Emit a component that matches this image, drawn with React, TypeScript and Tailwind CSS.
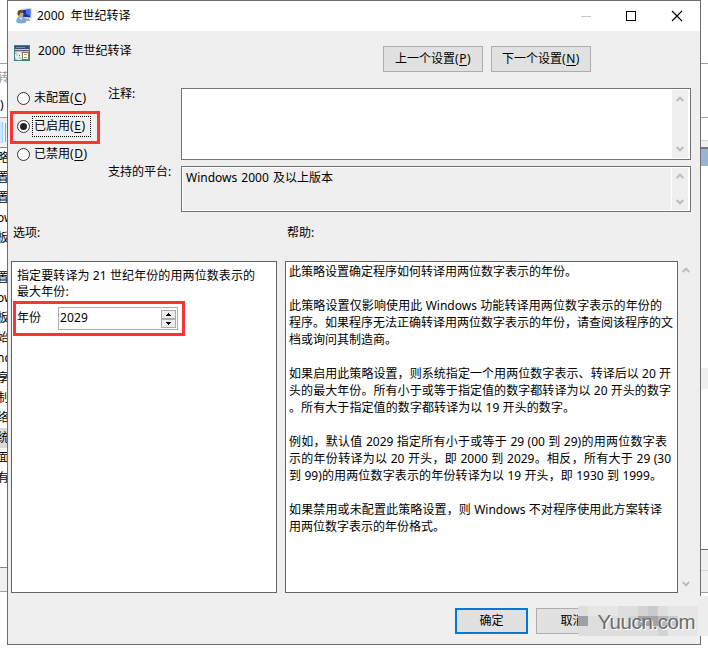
import React from 'react';

const help: { t: string; w: number }[] = [
  { t: '此策略设置确定程序如何转译用两位数字表示的年份。', w: 288 },
  { t: '', w: 0 },
  { t: '此策略设置仅影响使用此 Windows 功能转译用两位数字表示的年份的', w: 373 },
  { t: '程序。如果程序无法正确转译用两位数字表示的年份，请查阅该程序的文', w: 384 },
  { t: '档或询问其制造商。', w: 108 },
  { t: '', w: 0 },
  { t: '如果启用此策略设置，则系统指定一个用两位数字表示、转译后以 20 开', w: 382 },
  { t: '头的最大年份。所有小于或等于指定值的数字都转译为以 20 开头的数字', w: 382 },
  { t: '。所有大于指定值的数字都转译为以 19 开头的数字。', w: 286 },
  { t: '', w: 0 },
  { t: '例如，默认值 2029 指定所有小于或等于 29 (00 到 29)的用两位数字表', w: 378 },
  { t: '示的年份转译为以 20 开头，即 2000 到 2029。相反，所有大于 29 (30', w: 382 },
  { t: '到 99)的用两位数字表示的年份转译为以 19 开头，即 1930 到 1999。', w: 373 },
  { t: '', w: 0 },
  { t: '如果禁用或未配置此策略设置，则 Windows 不对程序使用此方案转译', w: 373 },
  { t: '用两位数字表示的年份格式。', w: 156 },
];

const treeRows = ['略', '置', '置', 'ow', '板', '', '置', 'ow', '板', '始', 'nd', '享', '制', '络', '统', '面', '有'];

function Chevron({ up = false }: { up?: boolean }) {
  return (
    <svg width="8" height="6" viewBox="0 0 8 6" fill="none" stroke="#bcbcbc" strokeWidth="2" className="block">
      <path d={up ? 'M.7 5 4 1.7 7.3 5' : 'M.7 1 4 4.3 7.3 1'} />
    </svg>
  );
}

function ScrollBar({ className }: { className: string }) {
  return (
    <div className={`flex w-4 flex-col items-center justify-between bg-[#efefef] ${className}`}>
      <Chevron up />
      <Chevron />
    </div>
  );
}

function Radio({ label, k, on = false }: { label: string; k: string; on?: boolean }) {
  return (
    <div className="flex h-7 items-center">
      <span className="flex h-[13px] w-[13px] items-center justify-center rounded-full border border-[#333] bg-white">
        {on && <span className="h-[7px] w-[7px] rounded-full bg-[#222]" />}
      </span>
      <span className={`ml-[2px] flex h-[21px] w-[59px] items-center border border-dotted pl-px ${on ? 'border-black' : 'border-transparent'}`}>
        {label}<span className="tracking-[0.6px]">(<u className="underline-offset-2">{k}</u>)</span>
      </span>
    </div>
  );
}

function SettingButton({ label, k }: { label: string; k: string }) {
  return (
    <div className="flex h-[26px] w-[100px] items-center justify-center border border-[#adadad] bg-[#e1e1e1]">
      {label}<span className="tracking-[0.5px]">(<u className="underline-offset-2">{k}</u>)</span>
    </div>
  );
}

function UserMonitorIcon() {
  return (
    <svg width="16" height="16" viewBox="0 0 16 16">
      <path d="M5 1 15.500 0v10.500L5 10z" fill="#c9ced6" />
      <path d="M6 2.200 14.300 1.200v8L6 8.800z" fill="#1233b4" />
      <path d="M10 1.700 14.300 1.200v7L10 6z" fill="#4777e6" />
      <path d="M9 10.500h4l1.500 2.500H9z" fill="#a9adb5" />
      <path d="M.5 14.500c-1-4 1.500-6 4.500-6s5.500 2 5 6c-2 1.200-6.500 1.200-9.500 0z" fill="#77acd4" />
      <path d="M3 9.500 5 12l2-2.500z" fill="#dbeaf5" />
      <ellipse cx="4.700" cy="6" rx="2.700" ry="3.500" fill="#d2a37d" />
      <path d="M1.500 6C1 2.500 3 1.500 5 2c2 .3 2.500 2 2 3-2-.5-3-.5-3.500 2l-1 1z" fill="#5b4a3d" />
    </svg>
  );
}

function SettingIcon() {
  return (
    <svg width="16" height="16" viewBox="0 0 16 16" shapeRendering="crispEdges">
      <path fill="#3f7d80" d="M0 0h16v16H0z" />
      <path fill="#3b4788" d="M1 1h14v3H1z" />
      <path fill="#7f88b4" d="M2 2h9v1H2z" />
      <path fill="#c9ccd8" d="M1 4h14v1H1z" />
      <path fill="#5b5e70" d="M1 5h14v1H1z" />
      <path fill="#bdbbb8" d="M1 6h14v9H1z" />
      <circle cx="5" cy="11" r="4.200" fill="#e9e9f0" shapeRendering="auto" />
      <path fill="#c5e2b8" d="M2 8h2v3H2z" />
      <path fill="#dfc6de" d="M5 12h2v2H5z" />
      <path fill="#62636b" d="M5 10h1v1H5z" />
      <path fill="#86745c" d="M8 7h7v8H8z" />
      <path fill="#fffbe5" d="M9 8h5v6H9z" />
      <path fill="#a69479" d="M10 9h3v1h-3zM10 12h3v1h-3z" />
    </svg>
  );
}

function Watermark() {
  return (
    <div className="absolute left-[578px] top-[596px] flex h-10 w-[130px] items-end">
      <svg width="130" height="40" viewBox="0 0 130 40" shapeRendering="crispEdges">
        <path fill="#ededed" d="M120 0h10v40h-10z" />
        <path fill="#dedede" d="M0 10h120v30H0z" />
        <path fill="#e6e6e6" d="M10 10h30v10H10zM90 10h30v30H90z" />
        <path fill="#d3d3d3" d="M60 10h10v10H60zM50 20h10v10H50zM80 30h10v10H80z" />
        <path fill="#c8cace" d="M70 10h10v10H70zM90 20h10v10H90z" />
        <path fill="#9da1a5" d="M0 20h10v10H0z" />
        <path fill="#a4a4a4" d="M60 20h20v10H60z" />
        <path fill="#b9b9b9" d="M80 20h10v10H80z" />
        <g fontFamily="Liberation Sans, sans-serif" fontSize="20.500">
          <text x="20.500" y="34" fill="#fff" textLength="98">Yuucn.com</text>
          <text x="19.500" y="33" fill="#6c6c6c" textLength="98">Yuucn.com</text>
        </g>
      </svg>
    </div>
  );
}

export default function App() {
  return (
    <div className="relative flex h-[652px] w-[708px] overflow-hidden bg-white font-['Noto_Sans','Noto_Sans_CJK_SC',sans-serif] text-xs text-black">
      {/* parent window, left sliver */}
      <div className="h-[652px] w-[7px] shrink-0 overflow-hidden">
        <div className="h-16 border-b border-[#a0a0a0]" />
        <div className="flex h-[54px] flex-col border-b border-[#a0a0a0]">
          <span className="-ml-[3px] h-7 whitespace-nowrap leading-7 text-[#999]">转</span>
          <span className="leading-[26px]">)</span>
        </div>
        <div className="flex h-[30px] items-center justify-between border-b border-[#828790] bg-[#f0f0f0]">
          <span className="h-[21px] w-[3px] border-r border-[#99d1ff] bg-[#cce8ff]" />
          <span className="mr-px h-[19px] w-px bg-[#a0a0a0]" />
        </div>
        <div className="h-[420px] border-b border-[#828790]">
          {treeRows.map((t, i) => (
            <div key={i} className={`flex h-5 items-center whitespace-nowrap ${i === 14 ? 'bg-[#d9d9d9]' : ''}`}>
              <span className="-ml-[3px]">{t}</span>
            </div>
          ))}
        </div>
        <div className="h-[24px] border-b border-[#a0a0a0] bg-[#f0f0f0]" />
      </div>

      <div className="flex h-[645px] w-[694px] shrink-0 flex-col border border-[#6e6e6e] bg-[#efefef]">
        <header className="flex h-[30px] shrink-0 items-center bg-white pl-2">
          <UserMonitorIcon />
          <span className="ml-[5px] [word-spacing:3px]">2000 年世纪转译</span>
          <svg className="ml-auto mr-[16px]" width="104" height="12" viewBox="0 0 104 12" fill="none">
            <path d="M1 6.500h10" stroke="#c5c5c5" />
            <path d="M46.500 1.500h9v9h-9z" stroke="#000" shapeRendering="crispEdges" />
            <path d="m92 1 10 10m0-10-10 10" stroke="#000" strokeWidth="1.100" />
          </svg>
        </header>

        <div className="flex h-[57px] shrink-0 items-start pl-[6px]">
          <div className="pt-[14px]"><SettingIcon /></div>
          <span className="ml-2 w-[345px] pt-[12px] [word-spacing:3px]">2000 年世纪转译</span>
          <div className="flex gap-2 pt-[15px]">
            <SettingButton label="上一个设置" k="P" />
            <SettingButton label="下一个设置" k="N" />
          </div>
        </div>

        <div className="flex h-[124px] shrink-0">
          <div className="w-[100px] pl-[9px]">
            <div className="-mt-[4px]">
              <Radio label="未配置" k="C" />
              <Radio label="已启用" k="E" on />
              <Radio label="已禁用" k="D" />
            </div>
          </div>
          <div className="w-[73px] whitespace-nowrap leading-[18px]">
            <div className="-mt-[3px] h-[78px]">注释:</div>
            <div>支持的平台:</div>
          </div>
          <div className="flex w-[510px] flex-col gap-[6px]">
            <div className="flex h-[72px] justify-end border border-[#737373] bg-white py-px pr-[2px]">
              <ScrollBar className="py-[6px]" />
            </div>
            <div className="flex h-[46px] justify-between border border-[#737373] bg-[#efefef]">
              <span className="grow border border-white pl-[3px] leading-5 [word-spacing:1px]">Windows 2000 及以上版本</span>
              <ScrollBar className="w-[18px] border-y border-r-2 border-white py-[5px]" />
            </div>
          </div>
        </div>

        <div className="flex h-[49px] shrink-0 items-center pb-[8px] pl-[5px]">
          <span className="w-[274px]">选项:</span>
          <span>帮助:</span>
        </div>

        <div className="flex h-[332px] shrink-0 pl-[3px]">
          <section className="h-full w-[266px] border border-[#646464] bg-white pl-[5px] pt-[6px]">
            <p className="whitespace-nowrap leading-4 tracking-[0.1px]">指定要转译为 21 世纪年份的用两位数表示的<br />最大年份:</p>
            <div className="mt-[7px] flex items-center">
              <span className="w-[41px] pb-px">年份</span>
              <div className="flex h-[23px] w-[120px] items-center justify-between border border-[#abadb3] bg-white pl-px pr-px">
                <span className="pb-[2px] tracking-[0.1px]">2029</span>
                <div className="flex w-[15px] flex-col">
                  {[true, false].map((up) => (
                    <span key={String(up)} className="flex h-[9px] items-center justify-center border border-[#acacac] bg-[#ededed]">
                      <svg width="5" height="3" viewBox="0 0 5 3" shapeRendering="crispEdges"><path d={up ? 'M2 0h1v1H2zM1 1h3v1H1zM0 2h5v1H0z' : 'M0 0h5v1H0zM1 1h3v1H1zM2 2h1v1H2z'} /></svg>
                    </span>
                  ))}
                </div>
              </div>
            </div>
          </section>
          <section className="ml-2 h-full w-[393px] border border-[#646464] bg-white pl-[3px] pt-[1px]">
            {help.map((l, i) => (
              <div key={i} className="h-[17px] whitespace-pre leading-[17px]" style={{ width: l.w, textAlignLast: 'justify', textJustify: 'inter-character' } as React.CSSProperties}>{l.t}</div>
            ))}
          </section>
          <ScrollBar className="py-[6px]" />
        </div>

        <footer className="flex grow gap-2 pl-[447px] pt-[15px]">
          <button className="h-[26px] w-[73px] border-2 border-[#0078d7] bg-[#e1e1e1]">确定</button>
          <button className="h-[26px] w-[73px] border border-[#adadad] bg-[#e1e1e1]">取消</button>
        </footer>
      </div>

      {/* parent window, right sliver */}
      <div className="h-[652px] w-[7px] shrink-0">
        <div className="h-16 border-b border-[#a0a0a0]" />
        <div className="h-[54px] border-b border-[#a0a0a8]" />
        <div className="h-[23px] border-b border-[#d4d4d4]" />
        <div className="h-[8px] border-b-2 border-[#777] bg-[#f0f0f0]" />
        <div className="h-[17px] bg-[#99b4d1]" />
        <div className="h-[202px]" />
        <div className="h-[21px] bg-[#f0f0f0]" />
        <div className="h-[161px] border-b border-[#6e6e6e]" />
        <div className="h-[21px] border-b border-[#d4d4d4] bg-[#f0f0f0]" />
        <div className="h-[22px] border-b border-[#a0a0a0] bg-[#f0f0f0]" />
      </div>

      <div className="absolute left-[10px] top-[111px] h-[33px] w-[90px] border-3 border-[#fb3535]" />
      <div className="absolute left-[13px] top-[301px] h-[35px] w-[172px] border-3 border-[#fb3535]" />
      <Watermark />
    </div>
  );
}
